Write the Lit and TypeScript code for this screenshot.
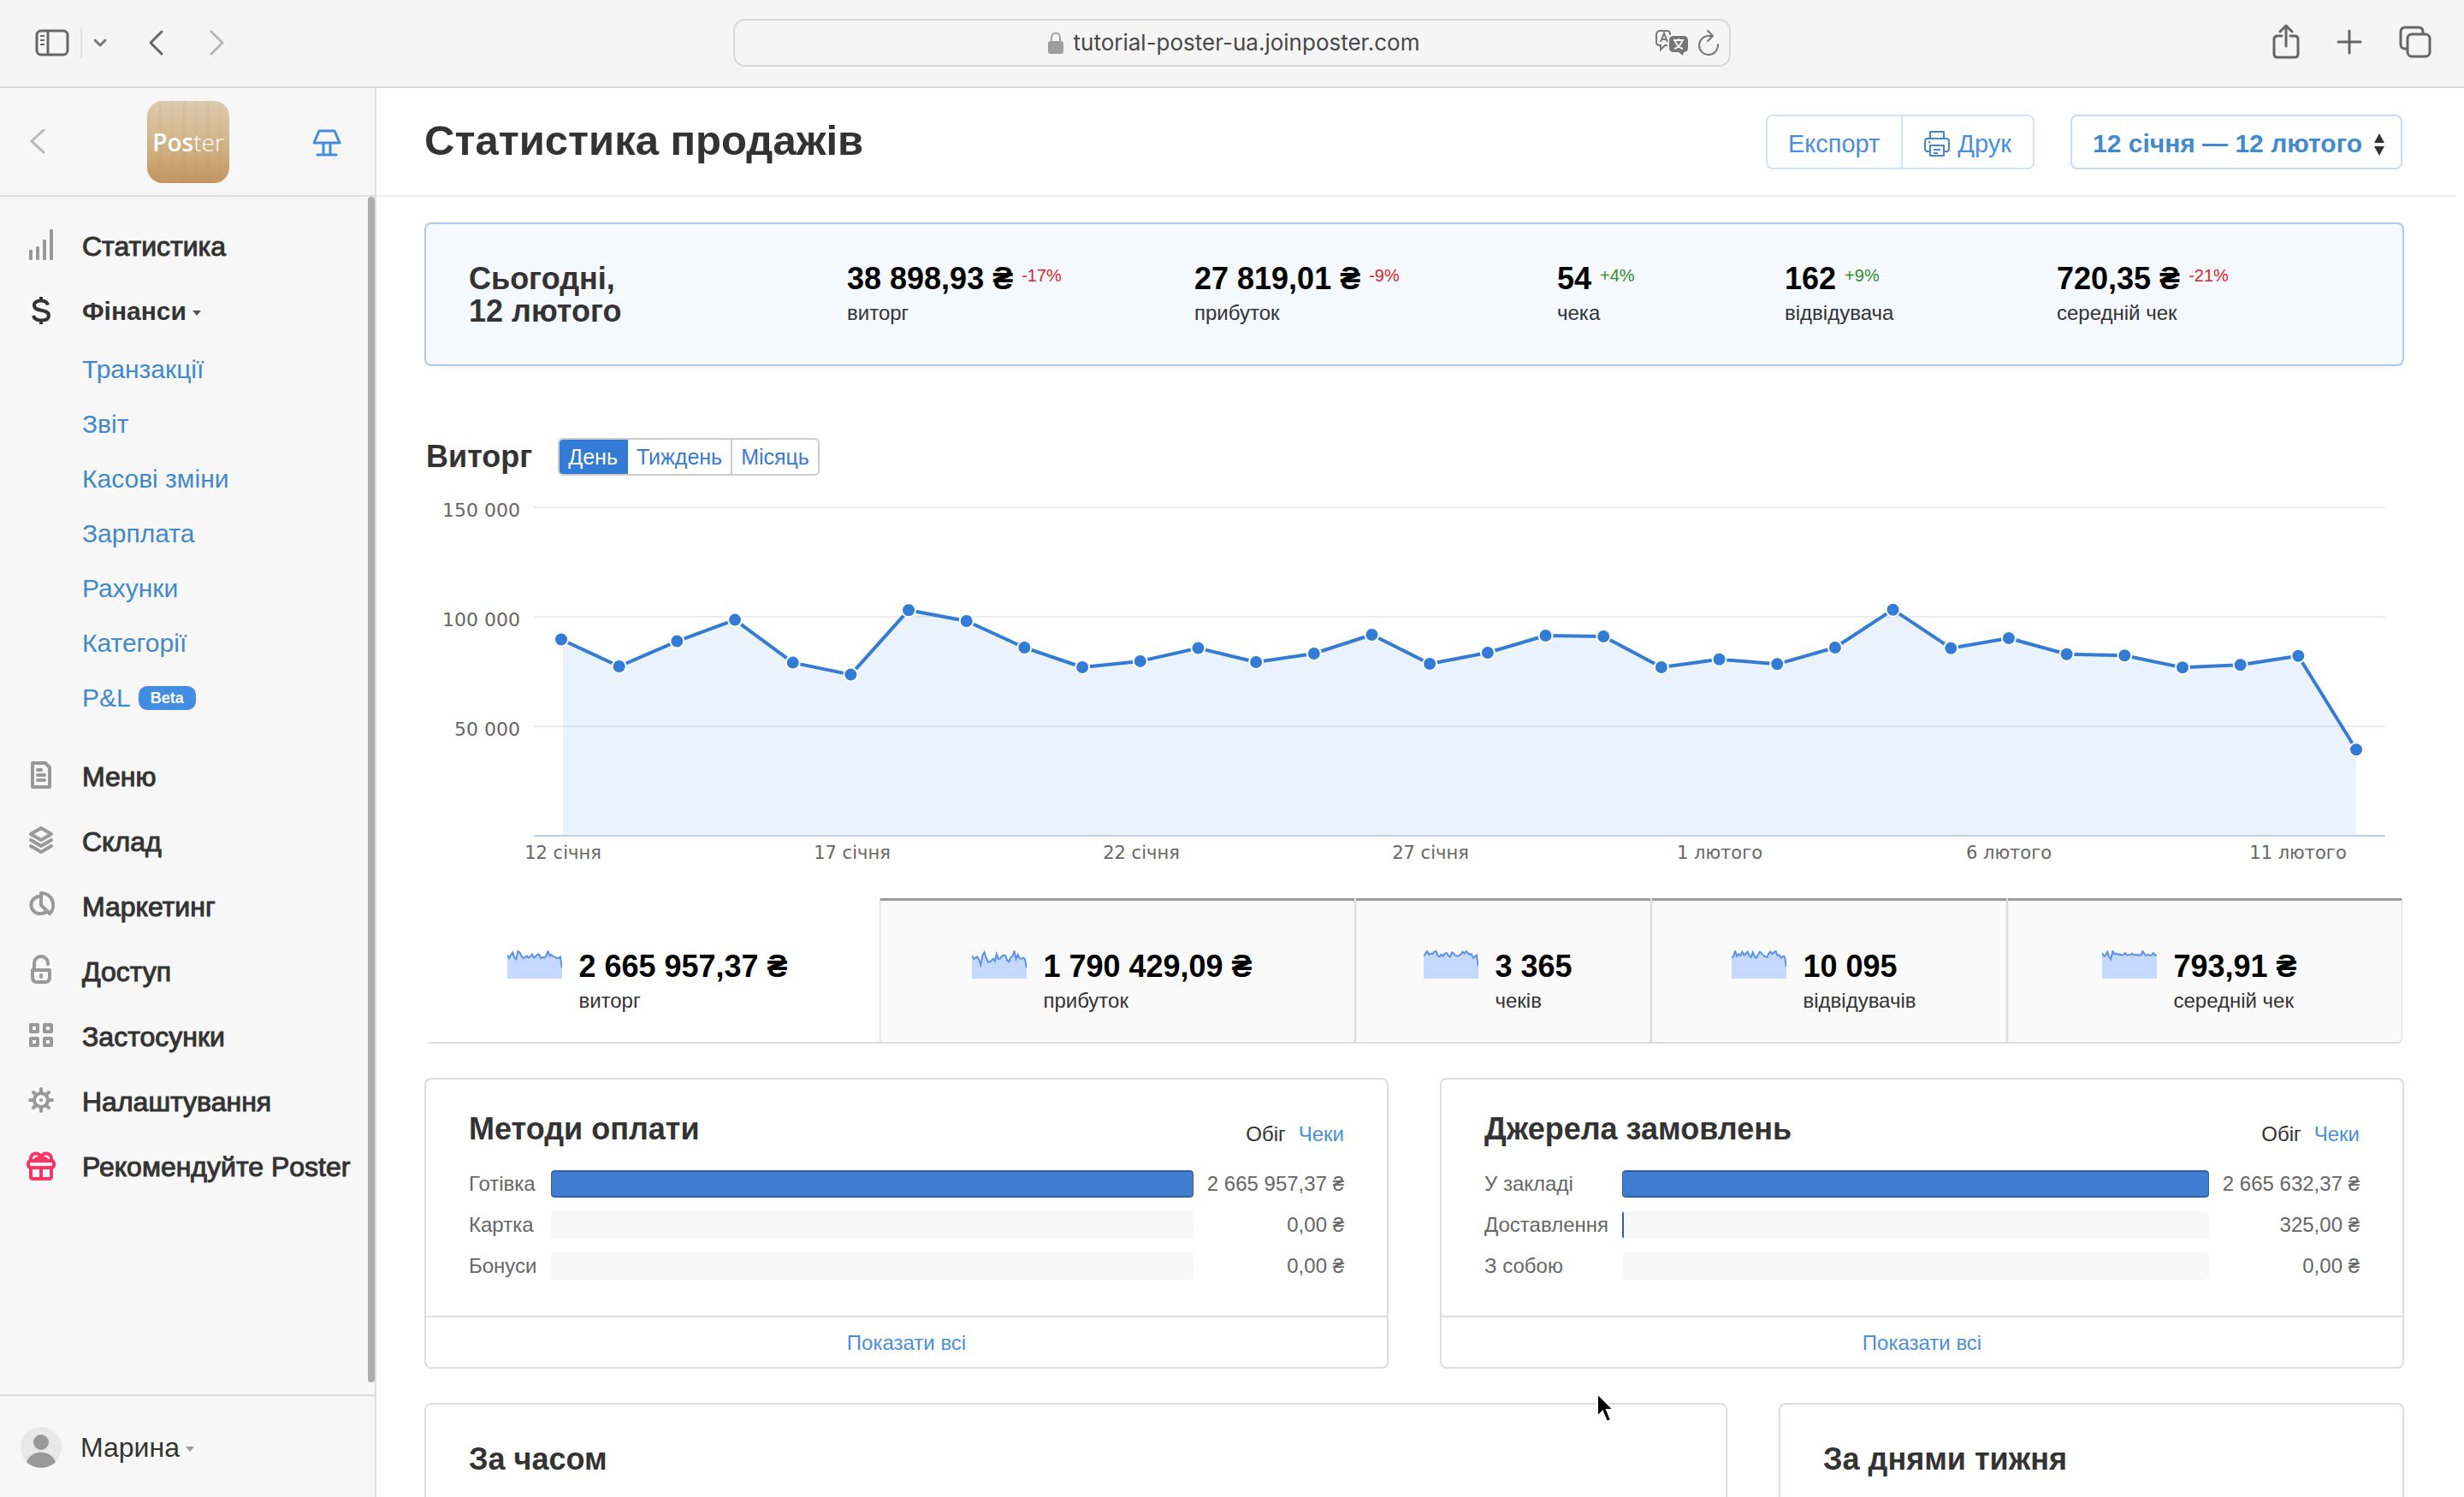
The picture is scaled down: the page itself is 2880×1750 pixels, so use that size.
import { LitElement, html, svg, css, nothing, type TemplateResult } from "lit";
import { customElement, property, state } from "lit/decorators.js";
import { classMap } from "lit/directives/class-map.js";
import { styleMap } from "lit/directives/style-map.js";

const revenue = [
  89650, 77340, 88830, 98590, 79060, 73590, 103050, 98050, 85940, 76950, 79730,
  85700, 79300, 83200, 91800, 78520, 83590, 91400, 91020, 76950, 80590, 78400,
  85940, 103240, 85660, 90230, 82930, 82300, 76840, 78010, 82150, 39340,
];
const profit = [
  84, 72, 76, 80, 68, 50, 84, 96, 78, 62, 60, 66, 72, 64, 90, 72, 74, 82, 86,
  84, 66, 62, 78, 82, 100, 72, 88, 74, 72, 76, 72, 38,
];
const receipts = [
  82, 92, 100, 88, 92, 90, 98, 100, 84, 80, 88, 82, 92, 94, 84, 80, 96, 92, 84,
  82, 84, 88, 98, 92, 100, 94, 88, 90, 76, 80, 86, 44,
];
const visitors = [
  76, 82, 100, 82, 90, 84, 98, 86, 90, 98, 84, 78, 96, 80, 76, 88, 98, 92, 84,
  80, 78, 92, 98, 90, 96, 100, 84, 86, 76, 82, 80, 44,
];
const average = [
  92, 80, 84, 96, 78, 70, 98, 88, 90, 86, 88, 84, 85, 92, 84, 86, 85, 90, 84,
  86, 84, 85, 84, 98, 88, 83, 86, 83, 84, 92, 84, 85,
];

const navIcons: Record<string, TemplateResult> = {
  stats: svg`<g fill="#999"><rect x="6" y="24" width="4" height="12" rx="1"/><rect x="14" y="20" width="4" height="16" rx="1"/><rect x="22" y="12" width="4" height="24" rx="1"/><rect x="30" y="0" width="4" height="36" rx="1"/></g>`,
  finance: svg`<path d="M28 12.500C27 9 24 7.500 20 7.500c-5 0-8 1.500-8 5.500 0 8.500 17 3 17 12 0 4-4 5.500-9 5.500-5 0-8-2-9-5.500M20 3v5M20 30v5" fill="none" stroke="#333" stroke-width="4"/>`,
  menu: svg`<g fill="none" stroke="#999" stroke-width="4" stroke-linejoin="round"><path d="M10 4h15l5 5v23H10z"/><path d="M16 12h4M16 18h8M16 24h8" stroke-linecap="round"/></g>`,
  stock: svg`<g fill="none" stroke="#999" stroke-width="4" stroke-linejoin="round" stroke-linecap="round"><path d="M20 4l12 7-12 7-12-7z"/><path d="M8 18l12 7 12-7M8 25l12 7 12-7"/></g>`,
  marketing: svg`<g fill="none" stroke="#999" stroke-width="4" stroke-linecap="round" stroke-linejoin="round"><path d="M17 8a10 10 0 0 0 3 20c3 0 5-1 7-3"/><path d="M20 18V4a14 14 0 0 1 10 24z"/></g>`,
  access: svg`<g fill="none" stroke="#999" stroke-width="4" stroke-linecap="round" stroke-linejoin="round"><path d="M12 17V10a8 8 0 0 1 16 0v1"/><path d="M10 18h20v8c0 4-2 6-5 6H15c-3 0-5-2-5-6z"/></g><rect x="18" y="22" width="4" height="6" rx="2" fill="#999"/>`,
  apps: svg`<g fill="none" stroke="#999" stroke-width="4" stroke-linejoin="round"><rect x="8" y="6" width="8" height="8"/><rect x="24" y="6" width="8" height="8"/><rect x="8" y="22" width="8" height="8"/><rect x="24" y="22" width="8" height="8"/></g>`,
  settings: svg`<g fill="none" stroke="#999" stroke-width="4" stroke-linecap="round"><circle cx="20" cy="18" r="8"/><path d="M20 5v4M20 27v4M7 18h4M29 18h4M11 9l3 3M26 24l3 3M29 9l-3 3M14 24l-3 3"/></g><circle cx="20" cy="18" r="2" fill="#999"/>`,
  refer: svg`<g fill="none" stroke="#fa3465" stroke-width="4" stroke-linejoin="round" stroke-linecap="round"><path d="M8 21v11c0 1 1 2 2 2h20c1 0 2-1 2-2V21M20 21v13"/><rect x="5" y="13" width="30" height="8" rx="3"/><path d="M8 11C7 4 17 2 20 9C23 2 33 4 32 11M20 9l-6 2M20 9l6 2"/></g>`,
};

const caret = html`<svg class="caret" width="10" height="6" viewBox="0 0 10 6" aria-hidden="true"><path d="M0 0h10L5 6z" fill="currentColor" /></svg>`;

const base = css`
  * { box-sizing: border-box; }
  button, select, input { font: inherit; color: inherit; background: none; border: 0; padding: 0; margin: 0; }
  button { cursor: pointer; }
  a { text-decoration: none; color: #4289ca; }
  h1, h2, p, ul { margin: 0; padding: 0; }
  ul { list-style: none; }
  svg { display: block; flex: none; }
`;

@customElement("browser-bar")
class BrowserBar extends LitElement {
  static styles = [base, css`
    :host { display: grid; grid-template-columns: 1fr minmax(0, 1166px) 1fr; align-items: center; height: 103px; padding-bottom: 2px; background: #f5f5f5; border-bottom: 2px solid #d9d9d9; }
    .left { display: flex; align-items: center; padding-left: 40px; color: #666; }
    .divider { width: 2px; height: 36px; margin: 0 12px; background: #e2e2e2; }
    .back { margin-left: 46px; }
    .forward { margin-left: 48px; color: #b5b5b5; }
    .address { display: flex; align-items: center; height: 56px; border: 2px solid #d8d8d8; border-radius: 14px; padding: 0 10px; }
    .place { flex: 1; display: flex; align-items: center; justify-content: center; gap: 12px; padding-left: 80px; }
    .place input { field-sizing: content; font: 26px/32px Inter, sans-serif; color: #484848; outline: 0; }
    .tools { display: flex; align-items: center; gap: 12px; color: #777; }
    .right { display: flex; align-items: center; justify-content: flex-end; gap: 42px; padding: 0 37px 2px 0; color: #666; }
  `];

  render() {
    return html`
      <div class="left">
        <button aria-label="Бічна панель"><svg width="42" height="34" viewBox="0 0 42 34" fill="none" stroke="currentColor" stroke-width="3"><rect x="3" y="3" width="36" height="28" rx="5" /><path d="M16 3v28" /><path d="M7 9h5M7 14h5M7 19h5" stroke-width="2" /></svg></button>
        <span class="divider"></span>
        <button aria-label="Групи вкладок"><svg width="18" height="12" viewBox="0 0 18 12" fill="none" stroke="#777" stroke-width="3" stroke-linecap="round" stroke-linejoin="round"><path d="M3 3l6 6 6-6" /></svg></button>
        <button class="back" aria-label="Назад"><svg width="22" height="32" viewBox="0 0 22 32" fill="none" stroke="currentColor" stroke-width="3" stroke-linecap="round" stroke-linejoin="round"><path d="M17 3L4 16l13 13" /></svg></button>
        <button class="forward" aria-label="Вперед"><svg width="22" height="32" viewBox="0 0 22 32" fill="none" stroke="currentColor" stroke-width="3" stroke-linecap="round" stroke-linejoin="round"><path d="M5 3l13 13L5 29" /></svg></button>
      </div>
      <div class="address">
        <label class="place">
          <svg width="18" height="26" viewBox="0 0 18 26"><rect y="11" width="18" height="15" rx="3" fill="#9d9d9d" /><path d="M4 12V7c0-7 10-7 10 0v5" fill="none" stroke="#a3a3a3" stroke-width="2" /></svg>
          <input type="text" aria-label="Адреса" value="tutorial-poster-ua.joinposter.com" />
        </label>
        <div class="tools">
          <button aria-label="Переклад"><svg width="38" height="30" viewBox="0 0 38 30"><path d="M17 6V5c0-2-1-4-4-4H5C3 1 1 3 1 5v9c0 3 1 4 4 4h1v5l5-5h3" fill="none" stroke="currentColor" stroke-width="2" /><path d="M6 14l4-10 4 10M8 11h5" fill="none" stroke="currentColor" stroke-width="2" /><path d="M21 7h12c3 0 5 2 5 5v9c0 3-2 5-5 5l-1 4-5-4h-6c-3 0-5-2-5-5v-9c0-3 2-5 5-5z" fill="currentColor" /><path d="M21 12h12M27 10v2M31 13c-1 4-5 8-9 9M23 13c1 4 5 8 9 9" fill="none" stroke="#f5f5f5" stroke-width="2" /></svg></button>
          <button aria-label="Оновити"><svg width="26" height="30" viewBox="0 0 26 30" fill="none" stroke="currentColor" stroke-width="2" stroke-linecap="round" stroke-linejoin="round"><path d="M23 17A11 11 0 1 1 12 7h4M11 1l6 6-6 6" /></svg></button>
        </div>
      </div>
      <div class="right">
        <button aria-label="Поділитися"><svg width="34" height="42" viewBox="0 0 34 42" fill="none" stroke="currentColor" stroke-width="3" stroke-linecap="round" stroke-linejoin="round"><path d="M12 14H7c-2 0-4 1-4 4v17c0 2 1 4 4 4h20c3 0 4-2 4-4V18c0-3-2-4-4-4h-5M17 26V3M10 9l7-7 7 7" /></svg></button>
        <button aria-label="Нова вкладка"><svg width="30" height="30" viewBox="0 0 30 30" fill="none" stroke="currentColor" stroke-width="3" stroke-linecap="round"><path d="M15 2v26M2 15h26" /></svg></button>
        <button aria-label="Усі вкладки"><svg width="40" height="40" viewBox="0 0 40 40" fill="none" stroke="currentColor" stroke-width="3" stroke-linejoin="round"><path d="M10 28H8c-3 0-5-2-5-5V8c0-3 2-5 5-5h16c3 0 5 2 5 5v2" /><rect x="11" y="11" width="26" height="26" rx="5" /></svg></button>
      </div>
    `;
  }
}

@customElement("side-menu")
class SideMenu extends LitElement {
  static styles = [base, css`
    :host { display: flex; flex-direction: column; background: #f7f7f7; border-right: 2px solid #dedede; color: #333; font-size: 30px; line-height: 36px; }
    .brand { display: flex; align-items: center; justify-content: space-between; height: 127px; padding: 0 36px 0 32px; border-bottom: 2px solid #dedede; }
    .logo { display: flex; align-items: center; justify-content: center; width: 96px; height: 96px; margin-right: -24px; border-radius: 18px; color: #fff; font: 300 28px/36px "Open Sans", sans-serif;
      background: repeating-linear-gradient(90deg, #b98d5514 0 3px, #fff0 3px 13px, #b98d551c 13px 17px, #fff0 17px 28px), linear-gradient(#dccbb0, #d5ba92 40%, #cda878 70%, #c09660); }
    .logo b { font-weight: 600; }
    .scroll { flex: 1; display: flex; min-height: 0; }
    nav { flex: 1; padding-top: 20px; }
    .item { display: flex; align-items: center; gap: 28px; height: 76px; padding-left: 28px; color: #333; font-size: 32px; -webkit-text-stroke: 1px #333; }
    .item svg.icon { width: 40px; height: 40px; }
    .item.open { font-size: 30px; font-weight: 700; -webkit-text-stroke: 0; }
    .name { display: flex; align-items: center; gap: 7px; white-space: nowrap; }
    .caret { margin-top: 4px; color: #555; }
    .sub { margin-top: -2px; padding: 0 0 22px 96px; }
    .sub a { display: flex; align-items: center; gap: 9px; height: 64px; }
    .badge { padding: 0 14px; border-radius: 10px; background: #428ce2; color: #fff; font-size: 18px; line-height: 28px; font-weight: 700; }
    .track { width: 8px; padding-bottom: 14px; display: flex; }
    .thumb { flex: 1; border-radius: 4px; background: #adadad; }
    .user { display: flex; align-items: center; gap: 22px; height: 120px; padding: 2px 0 0 24px; border-top: 2px solid #dedede; font-size: 32px; text-align: left; }
    .user .caret { color: #999; }
  `];

  private item(icon: string, label: string, open = false) {
    return html`<a href="#${icon}" class=${classMap({ item: true, open })}>
      <svg class="icon" viewBox="0 0 40 40" aria-hidden="true">${navIcons[icon]}</svg>
      <span class="name">${label}${open ? caret : nothing}</span>
    </a>`;
  }

  render() {
    const sub = ["Транзакції", "Звіт", "Касові зміни", "Зарплата", "Рахунки", "Категорії"];
    return html`
      <div class="brand">
        <button aria-label="Назад"><svg width="22" height="34" viewBox="0 0 22 34" fill="none" stroke="#b8b8b8" stroke-width="3" stroke-linecap="round"><path d="M19 3L5 16l14 13" /></svg></button>
        <div class="logo"><b>Pos</b>ter</div>
        <button aria-label="Каса"><svg width="40" height="34" viewBox="0 0 40 34" fill="none" stroke="#468bdc" stroke-width="3" stroke-linejoin="round" stroke-linecap="round"><path d="M11 4h18l6 14H5zM16 19v12M24 19v12M9 32h22" /></svg></button>
      </div>
      <div class="scroll">
        <nav>
          ${this.item("stats", "Статистика")}
          ${this.item("finance", "Фінанси", true)}
          <div class="sub">
            ${sub.map((s) => html`<a href="#finance">${s}</a>`)}
            <a href="#finance">P&amp;L <span class="badge">Beta</span></a>
          </div>
          ${this.item("menu", "Меню")}
          ${this.item("stock", "Склад")}
          ${this.item("marketing", "Маркетинг")}
          ${this.item("access", "Доступ")}
          ${this.item("apps", "Застосунки")}
          ${this.item("settings", "Налаштування")}
          ${this.item("refer", "Рекомендуйте Poster")}
        </nav>
        <div class="track"><span class="thumb"></span></div>
      </div>
      <button class="user">
        <svg width="48" height="48" viewBox="0 0 48 48" aria-hidden="true"><circle cx="24" cy="24" r="24" fill="#e8e8e8" /><circle cx="24" cy="18" r="9" fill="#999" /><path d="M7 41c6-15 28-15 34 0-9 9-25 9-34 0z" fill="#999" /></svg>
        <span class="name">Марина ${caret}</span>
      </button>
    `;
  }
}

@customElement("spark-line")
class SparkLine extends LitElement {
  @property({ attribute: false }) values: number[] = [];
  static styles = css`:host { display: block; } svg { display: block; }`;

  render() {
    const max = Math.max(...this.values);
    const step = 64 / (this.values.length - 1);
    const points = this.values
      .map((v, i) => `${(i * step).toFixed(1)},${(33 - (v / max) * 32).toFixed(1)}`)
      .join(" ");
    return html`<svg width="64" height="33" viewBox="0 0 64 33" aria-hidden="true">
      <polygon points="0,33 ${points} 64,33" fill="#c5d8fd" />
      <polyline points=${points} fill="none" stroke="#5a91e6" stroke-width="2" />
    </svg>`;
  }
}

@customElement("sales-chart")
class SalesChart extends LitElement {
  @property({ attribute: false }) values: number[] = [];
  static styles = css`
    :host { display: block; }
    svg { display: block; width: 100%; height: auto; }
    text { font-family: "DejaVu Sans", sans-serif; fill: #666; }
    .axis { font-size: 22px; text-anchor: end; }
    .date { font-size: 21px; text-anchor: middle; }
  `;

  render() {
    const floor = 397;
    const x = (i: number) => 160 + (i * 2098) / 31;
    const y = (v: number) => floor - (v / 50000) * 128;
    const line = this.values.map((v, i) => `${x(i).toFixed(1)},${y(v).toFixed(1)}`).join(" ");
    const dates = ["12 січня", "17 січня", "22 січня", "27 січня", "1 лютого", "6 лютого", "11 лютого"];
    const levels: [number, string][] = [[150000, "150 000"], [100000, "100 000"], [50000, "50 000"]];
    return html`<svg viewBox="0 0 2314 440" role="img" aria-label="Виторг за днями">
      ${levels.map(([v, label]) => svg`
        <path d="M128 ${y(v)}H2292" stroke="#ececec" stroke-width="2" />
        <text class="axis" x="112" y=${y(v) + 11}>${label}</text>`)}
      <polygon points="162,${floor} ${line.replace(/^160\.0/, "162")} ${x(31)},${floor}" fill="#2f7ed8" fill-opacity="0.1" />
      <path d="M128 ${floor}H2292" stroke="#c0d0e0" stroke-width="2" />
      <polyline points=${line} fill="none" stroke="#347bd3" stroke-width="4" stroke-linejoin="round" />
      ${this.values.map((v, i) => svg`<circle cx=${x(i)} cy=${y(v)} r="8" fill="#327cd6" stroke="#fff" stroke-width="2" />`)}
      ${dates.map((d, i) => svg`<text class="date" x=${162 + i * 338} y="424">${d}</text>`)}
    </svg>`;
  }
}

interface Share { label: string; value: string; percent: number; }

@customElement("share-card")
class ShareCard extends LitElement {
  @property() heading = "";
  @property({ attribute: false }) rows: Share[] = [];
  @state() private mode = "Обіг";

  static styles = [base, css`
    :host { display: block; border: 2px solid #ddd; border-radius: 8px; background: #fff; font-size: 24px; line-height: 32px; }
    .body { padding: 36px 50px 34px; }
    .head { display: flex; align-items: flex-end; justify-content: space-between; margin-bottom: 18px; }
    h2 { font-size: 36px; line-height: 44px; color: #333; }
    .modes { display: flex; gap: 15px; }
    .modes button { color: #4a8fd8; }
    .modes .on { color: #333; }
    table { width: 100%; border-collapse: collapse; color: #666; }
    th, td { padding: 8px 0; white-space: nowrap; font-weight: 400; text-align: left; }
    .bar { width: 100%; padding: 8px 16px; }
    .rail { height: 32px; border-radius: 4px; background: #f7f7f7; overflow: hidden; }
    .fill { height: 32px; border: solid #375f9f; border-width: 2px 1px; border-radius: 4px; background: #407dd0; }
    .sum { text-align: right; }
    .all { display: block; padding: 14px 0 12px; border-top: 2px solid #ddd; text-align: center; color: #4a8fd8; }
  `];

  render() {
    return html`
      <div class="body">
        <div class="head">
          <h2>${this.heading}</h2>
          <div class="modes">
            ${["Обіг", "Чеки"].map((m) => html`<button class=${classMap({ on: m === this.mode })} @click=${() => (this.mode = m)}>${m}</button>`)}
          </div>
        </div>
        <table>
          ${this.rows.map((r) => html`<tr>
            <th scope="row">${r.label}</th>
            <td class="bar"><div class="rail">${r.percent ? html`<div class="fill" style=${styleMap({ width: `${r.percent}%` })}></div>` : nothing}</div></td>
            <td class="sum">${r.value}</td>
          </tr>`)}
        </table>
      </div>
      <a class="all" href="#all">Показати всі</a>
    `;
  }
}

@customElement("app-root")
class AppRoot extends LitElement {
  @state() private period = "День";
  @state() private metric = 0;

  static styles = [base, css`
    :host { display: flex; flex-direction: column; position: relative; height: 100vh; overflow: hidden; background: #fff; color: #333; font-family: "Liberation Sans", Arial, sans-serif; }
    .shell { flex: 1; display: grid; grid-template-columns: 440px 1fr; min-height: 0; }
    main { display: flex; flex-direction: column; min-width: 0; overflow: hidden; }
    header { display: flex; align-items: center; gap: 42px; height: 127px; margin-right: 10px; padding: 0 62px 0 56px; border-bottom: 2px solid #ececec; font-size: 30px; line-height: 36px; }
    h1 { flex: 1; padding-bottom: 4px; font-size: 49px; line-height: 56px; color: #333; }
    h2 { font-size: 36px; line-height: 44px; color: #333; }
    .actions { display: flex; border: 2px solid #d3e3f6; border-radius: 8px; color: #4a8fd8; }
    .actions button { display: flex; align-items: center; gap: 8px; height: 60px; padding: 4px 25px 0 24px; font-size: 29px; }
    .actions button + button { border-left: 2px solid #d3e3f6; }
    .range { display: flex; position: relative; }
    .range select { appearance: none; height: 64px; padding: 4px 44px 0 24px; border: 2px solid #c9dcf3; border-radius: 8px; font-weight: 700; color: #428bca; }
    .range svg { position: absolute; right: 20px; top: 22px; pointer-events: none; }
    .content { flex: 1; padding: 30px 70px 0 56px; min-height: 0; }

    .today { display: grid; grid-template-columns: 442fr 406fr 424fr 266fr 318fr 354fr; height: 168px; padding: 45px 50px 0; border: 2px solid #aec8ec; border-radius: 8px; background: #f5f8fd; }
    .today h2 { line-height: 38px; }
    .value { display: flex; align-items: flex-start; gap: 10px; font-size: 36px; line-height: 38px; font-weight: 700; color: #000; white-space: nowrap; }
    .value small { font-size: 20px; line-height: 30px; font-weight: 400; color: #d9262b; }
    .value small.up { color: #2f8f2f; }
    .label { font-size: 24px; line-height: 42px; color: #333; white-space: nowrap; }

    .title { display: flex; align-items: center; gap: 30px; margin: 84px 2px 24px; }
    .segments { display: flex; border: 2px solid #ccc; border-radius: 6px; overflow: hidden; font-size: 25px; line-height: 40px; color: #3a7bd0; }
    .segments button { padding: 0 10px; border-left: 2px solid #ccc; }
    .segments button:first-child { border-left: 0; }
    .segments .on { margin: -2px; padding: 2px 12px; background: #327cd6; color: #fff; }
    .segments .on + button { margin-left: 2px; border-left: 0; }

    .metrics { display: grid; grid-template-columns: 531fr 556fr 346fr 416fr 461fr; margin: 30px 2px 0; border-bottom: 2px solid #ddd; border-radius: 0 0 6px 6px; }
    .metrics button { display: flex; align-items: flex-start; justify-content: center; gap: 19px; height: 168px; padding: 61px 12px 0 0; border-right: 2px solid #ddd; background: #fafafa; box-shadow: inset 0 3px 1px #999; text-align: left; }
    .metrics button:last-child { border-right-width: 1px; border-radius: 0 0 6px 0; }
    .metrics .on { background: #fff; box-shadow: none; border-right-width: 1px; }
    .metrics .text { display: block; }

    .cards { display: grid; grid-template-columns: 1fr 1fr; gap: 60px; margin-top: 40px; }
    .lower { display: grid; grid-template-columns: 1523fr 731fr; gap: 60px; margin-top: 40px; }
    .panel { height: 440px; padding: 42px 50px; border: 2px solid #ddd; border-radius: 8px; }
    .cursor { position: absolute; left: 1864px; top: 1627px; }
  `];

  render() {
    const today: [string, string, string][] = [
      ["38 898,93 ₴", "-17%", "виторг"],
      ["27 819,01 ₴", "-9%", "прибуток"],
      ["54", "+4%", "чека"],
      ["162", "+9%", "відвідувача"],
      ["720,35 ₴", "-21%", "середній чек"],
    ];
    const metrics: [string, string, number[]][] = [
      ["2 665 957,37 ₴", "виторг", revenue],
      ["1 790 429,09 ₴", "прибуток", profit],
      ["3 365", "чеків", receipts],
      ["10 095", "відвідувачів", visitors],
      ["793,91 ₴", "середній чек", average],
    ];
    const payments: Share[] = [
      { label: "Готівка", value: "2 665 957,37 ₴", percent: 100 },
      { label: "Картка", value: "0,00 ₴", percent: 0 },
      { label: "Бонуси", value: "0,00 ₴", percent: 0 },
    ];
    const sources: Share[] = [
      { label: "У закладі", value: "2 665 632,37 ₴", percent: 100 },
      { label: "Доставлення", value: "325,00 ₴", percent: 0.01 },
      { label: "З собою", value: "0,00 ₴", percent: 0 },
    ];
    return html`
      <browser-bar></browser-bar>
      <div class="shell">
        <side-menu></side-menu>
        <main>
          <header>
            <h1>Статистика продажів</h1>
            <div class="actions">
              <button>Експорт</button>
              <button><svg width="32" height="32" viewBox="0 0 32 32" fill="none" stroke="#4289ca" stroke-width="2" stroke-linejoin="round" aria-hidden="true"><path d="M8 10V2h16v8M8 25H5c-2 0-3-1-3-3v-9c0-2 1-3 3-3h22c2 0 3 1 3 3v9c0 2-1 3-3 3h-3" /><path d="M8 18h16v12H8zM12 23h8M12 27h5M6 14h2" /></svg>Друк</button>
            </div>
            <div class="range">
              <select aria-label="Період"><option>12 січня — 12 лютого</option></select>
              <svg width="13" height="26" viewBox="0 0 13 26" aria-hidden="true"><path d="M6 0l6 11H0zM6 26l6-11H0z" fill="#333" /></svg>
            </div>
          </header>
          <div class="content">
            <section class="today">
              <h2>Сьогодні,<br />12 лютого</h2>
              ${today.map(([value, change, label]) => html`<div>
                <p class="value">${value}<small class=${classMap({ up: change.startsWith("+") })}>${change}</small></p>
                <p class="label">${label}</p>
              </div>`)}
            </section>
            <div class="title">
              <h2>Виторг</h2>
              <div class="segments">
                ${["День", "Тиждень", "Місяць"].map((p) => html`<button class=${classMap({ on: p === this.period })} @click=${() => (this.period = p)}>${p}</button>`)}
              </div>
            </div>
            <sales-chart .values=${revenue}></sales-chart>
            <div class="metrics">
              ${metrics.map(([value, label, values], i) => html`<button class=${classMap({ on: i === this.metric })} @click=${() => (this.metric = i)}>
                <spark-line .values=${values}></spark-line>
                <span class="text"><span class="value">${value}</span><span class="label">${label}</span></span>
              </button>`)}
            </div>
            <div class="cards">
              <share-card heading="Методи оплати" .rows=${payments}></share-card>
              <share-card heading="Джерела замовлень" .rows=${sources}></share-card>
            </div>
            <div class="lower">
              <section class="panel"><h2>За часом</h2></section>
              <section class="panel"><h2>За днями тижня</h2></section>
            </div>
          </div>
        </main>
      </div>
      <svg class="cursor" width="24" height="38" viewBox="0 0 24 38" aria-hidden="true"><path d="M3 2v27l6-6 5 12 5-2-5-12h8z" fill="#000" stroke="#fff" stroke-width="2" /></svg>
    `;
  }
}
